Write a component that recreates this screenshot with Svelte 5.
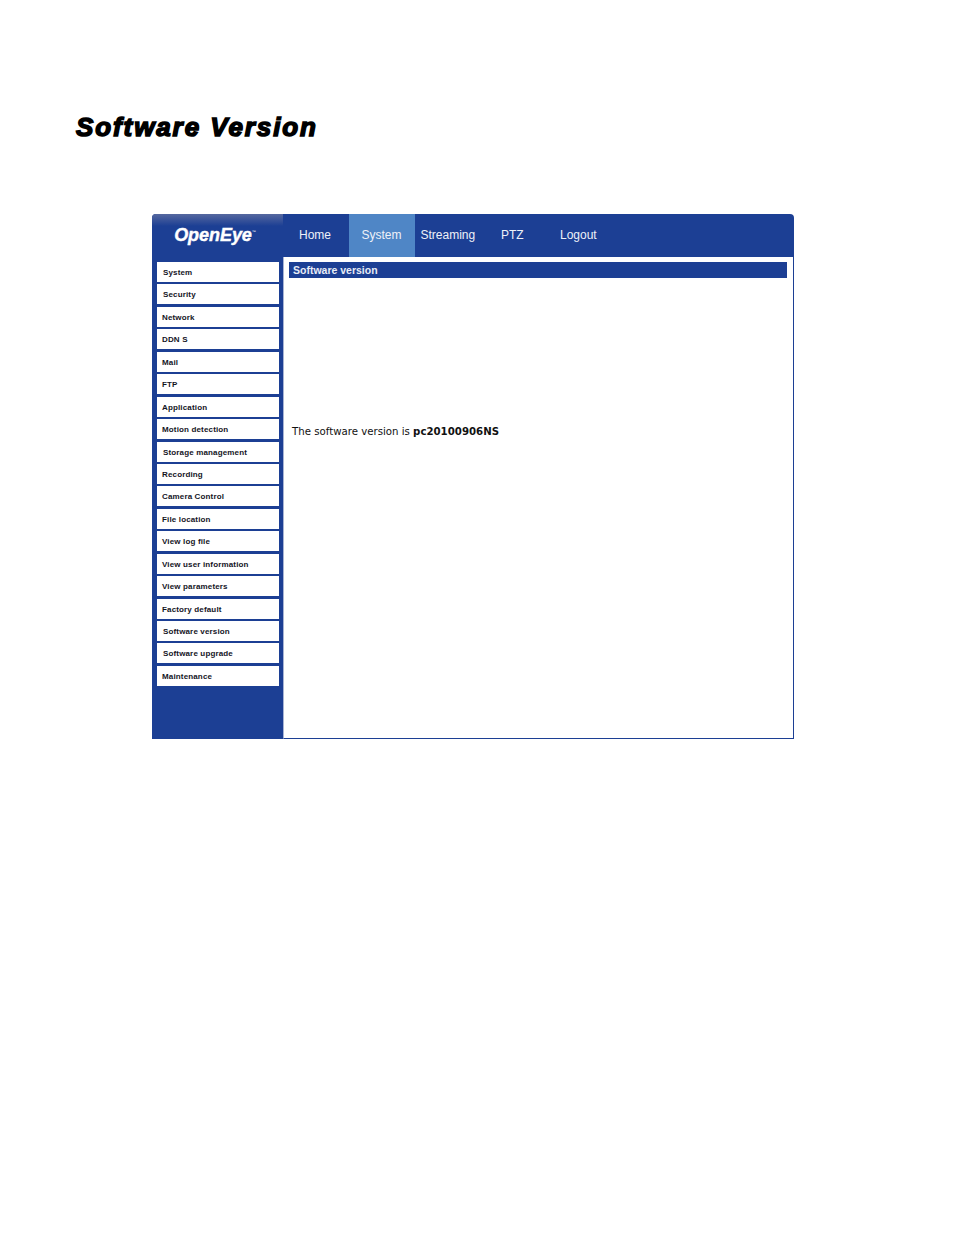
<script>
    const tabs = [
        { label: "Home", width: 66, pad: 16 },
        { label: "System", width: 66, pad: 12.5, active: true },
        { label: "Streaming", width: 66, pad: 5.5 },
        { label: "PTZ", width: 66, pad: 20 },
        { label: "Logout", width: 80, pad: 13 }
    ];
    const menu = [
        { label: "System", nudge: true },
        { label: "Security", nudge: true },
        { label: "Network" },
        { label: "DDN S" },
        { label: "Mail" },
        { label: "FTP" },
        { label: "Application" },
        { label: "Motion detection" },
        { label: "Storage management", nudge: true },
        { label: "Recording" },
        { label: "Camera Control" },
        { label: "File location" },
        { label: "View log file" },
        { label: "View user information" },
        { label: "View parameters" },
        { label: "Factory default" },
        { label: "Software version", nudge: true },
        { label: "Software upgrade", nudge: true },
        { label: "Maintenance" }
    ];
</script>

<main class="page">
    <h1>Software Version</h1>

    <div class="window">
        <aside class="side">
            <div class="logo"><span>OpenEye</span><sup>™</sup></div>
            <ul>
                {#each menu as item}
                    <li class:nudge={item.nudge}>{item.label}</li>
                {/each}
            </ul>
        </aside>

        <section class="main">
            <nav>
                {#each tabs as tab}
                    <div class="tab" class:active={tab.active} style="width: {tab.width}px; padding-left: {tab.pad}px">{tab.label}</div>
                {/each}
            </nav>
            <div class="content">
                <h2>Software version</h2>
                <p>The software version is <b>pc20100906NS</b></p>
            </div>
        </section>
    </div>
</main>

<style>
    :global(body) {
        margin: 0;
        background: #fff;
    }

    .page {
        width: 954px;
        height: 1248px;
        padding: 112px 0 0 76px;
        box-sizing: border-box;
    }

    h1 {
        margin: 0 0 72px;
        height: 30px;
        font: italic 700 26px/30px "Liberation Sans", sans-serif;
        letter-spacing: 1.9px;
        color: #000;
        -webkit-text-stroke: 1.5px #000;
    }

    .window {
        display: flex;
        width: 642px;
        height: 525px;
        margin-left: 76px;
        font-family: "Liberation Sans", sans-serif;
    }

    .side {
        width: 131px;
        flex: none;
        background: #1c3f94;
        border-radius: 4px 0 0 0;
    }

    .logo {
        height: 43px;
        display: flex;
        align-items: center;
        justify-content: center;
        padding-right: 5px;
        color: #fff;
        background: linear-gradient(#56689f 0, #1c3f94 12px);
        border-radius: 4px 0 0 0;
    }

    .logo span {
        font: italic 700 18px "Liberation Sans", sans-serif;
        letter-spacing: -0.05px;
        -webkit-text-stroke: 0.4px #fff;
    }

    .logo sup {
        font-size: 4px;
        margin-bottom: 8px;
    }

    ul {
        list-style: none;
        margin: 5px 0 0 5px;
        padding: 0;
        display: flex;
        flex-direction: column;
        gap: 2.45px;
    }

    li {
        width: 122px;
        height: 20px;
        padding-left: 5px;
        box-sizing: border-box;
        background: #fff;
        font-size: 8px;
        font-weight: 700;
        line-height: 21.5px;
        letter-spacing: 0.15px;
        color: #14141e;
    }

    li.nudge {
        padding-left: 6px;
    }

    .main {
        flex: 1;
        display: flex;
        flex-direction: column;
    }

    nav {
        height: 43px;
        flex: none;
        display: flex;
        background: #1c3f94;
        border-radius: 0 4px 0 0;
    }

    .tab {
        box-sizing: border-box;
        font-size: 12px;
        line-height: 42px;
        color: #eef1f8;
    }

    .tab.active {
        background: #4f86c6;
    }

    .content {
        flex: 1;
        display: flex;
        flex-direction: column;
        padding: 5px 6px 0 5px;
        border-left: 1px solid #a8b4d4;
        border-right: 1px solid #1c3f94;
        border-bottom: 1px solid #1c3f94;
    }

    h2 {
        margin: 0;
        height: 16px;
        padding-left: 4px;
        background: #1c3f94;
        color: #e8ecf6;
        font-size: 10.5px;
        font-weight: 700;
        line-height: 16px;
    }

    p {
        margin: 146px 0 0 3px;
        font: 10.2px/16px "DejaVu Sans", sans-serif;
        color: #111;
    }

    p b {
        font-weight: 700;
    }
</style>
